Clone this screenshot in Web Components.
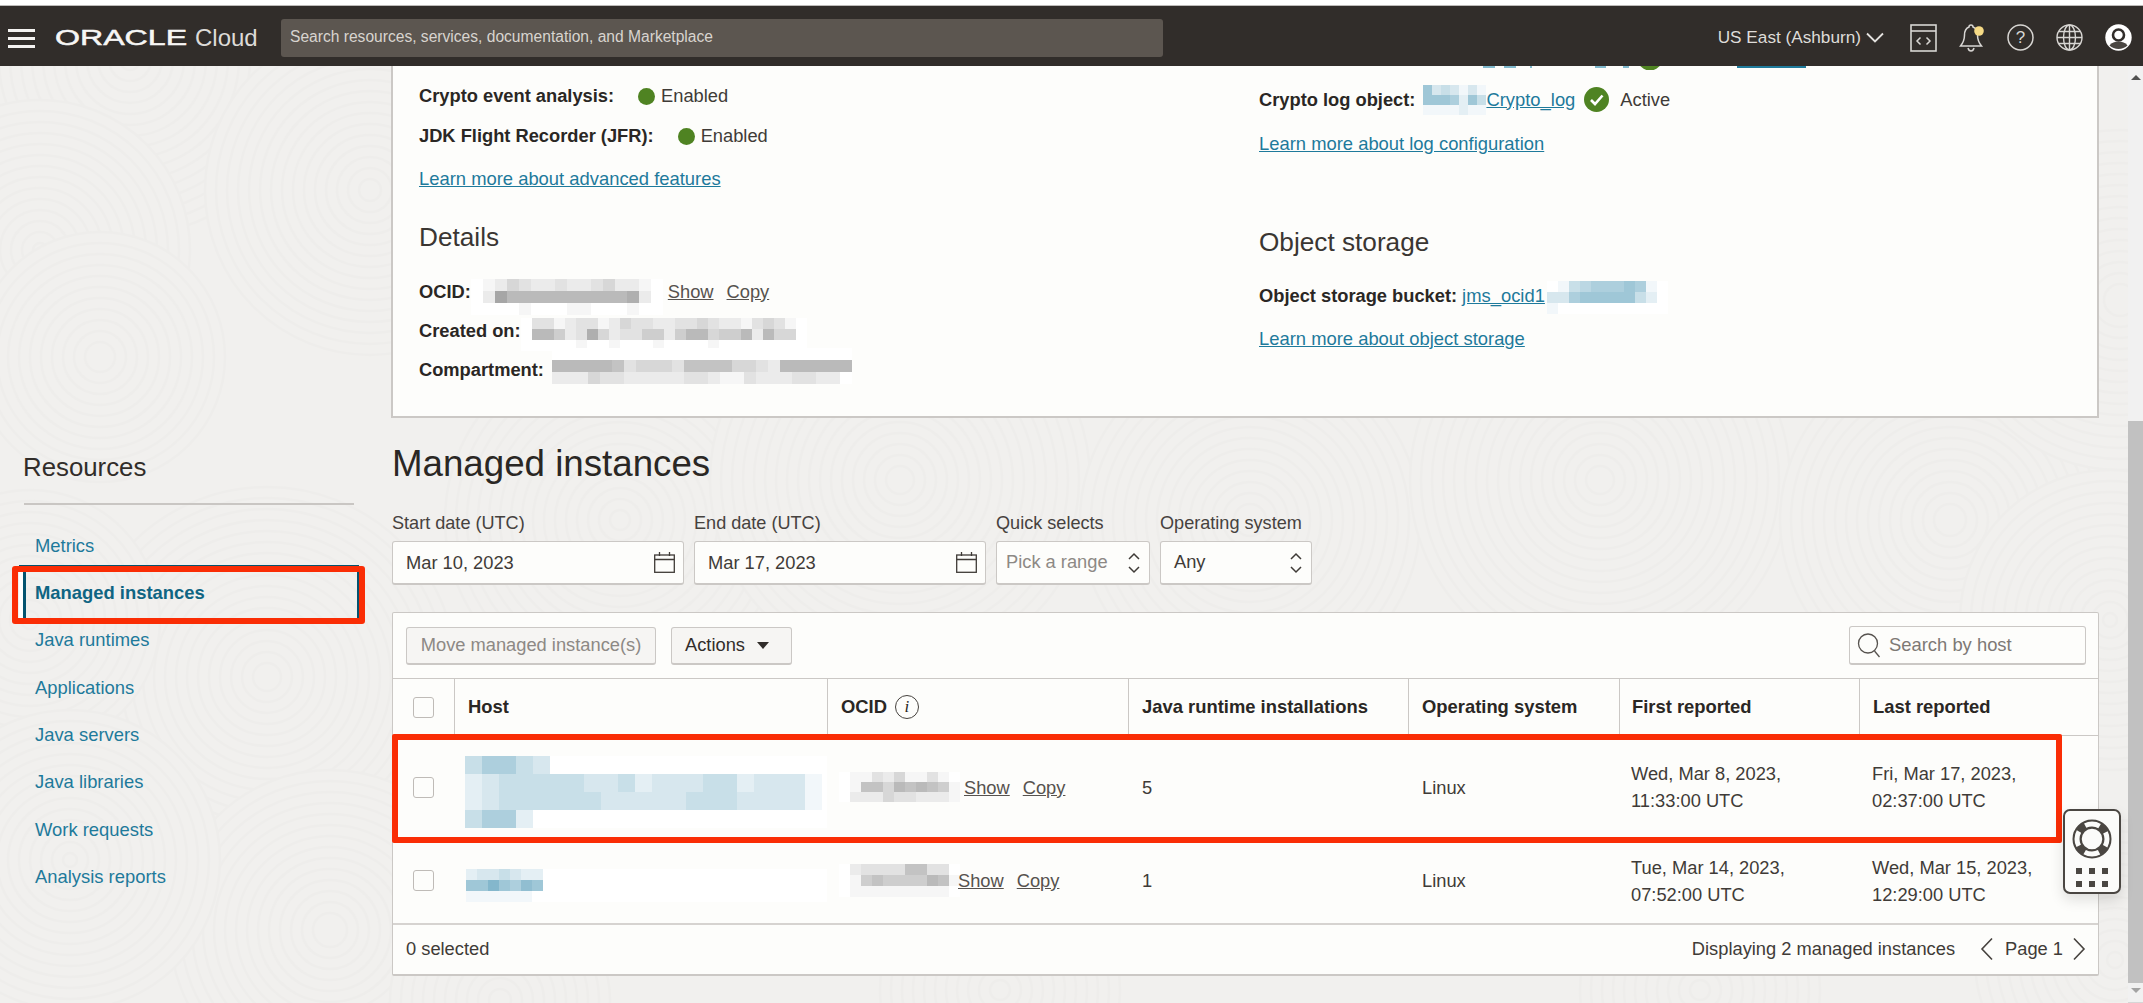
<!DOCTYPE html>
<html lang="en">
<head>
<meta charset="utf-8">
<title>Managed instances</title>
<style>
    html, body { margin: 0; height: 100%; overflow: hidden; }
    body { font: 18.3px/1.3 "Liberation Sans", Arial, sans-serif; color: #312d2a; background: #f1f0ee; }
</style>
</head>
<body>
<oci-page>
    <oci-header slot="header"></oci-header>

    <res-nav slot="nav" title="Resources">
        <nav-link>Metrics</nav-link>
        <nav-link active>Managed instances</nav-link>
        <nav-link>Java runtimes</nav-link>
        <nav-link>Applications</nav-link>
        <nav-link>Java servers</nav-link>
        <nav-link>Java libraries</nav-link>
        <nav-link>Work requests</nav-link>
        <nav-link>Analysis reports</nav-link>
    </res-nav>

    <fleet-summary slot="main">
        <div slot="left">
            <kv-row label="Crypto event analysis:" gap="25" style="margin-bottom:1px"><status-dot></status-dot><span>Enabled</span></kv-row>
            <kv-row label="JDK Flight Recorder (JFR):" gap="25"><status-dot></status-dot><span>Enabled</span></kv-row>
            <ext-link class="learn" style="margin-top:5px">Learn more about advanced features</ext-link>
            <sec-title style="margin-top:19px">Details</sec-title>
            <kv-row label="OCID:" style="margin-top:15px">
                <x-redact tone="gray" cw="12" ch="12" style="margin-top:10px" rows="0124322322342210|0297777777777820|0000100011000100"></x-redact>
                <copy-links style="margin-left:5px"></copy-links>
            </kv-row>
            <kv-row label="Created on:">
                <x-redact tone="gray" cw="11" ch="11" style="margin-top:8px" rows="03312331243322334322134310|07752384233552577455727440|00000100100010000100000000"></x-redact>
            </kv-row>
            <kv-row label="Compartment:">
                <x-redact tone="gray" cw="12" ch="12" style="margin:0 0 8px 8px" rows="0000000000000000000000000|7777763444366664432777777|2224332222233211322233220"></x-redact>
            </kv-row>
        </div>
        <div slot="right">
            <clipped-row></clipped-row>
            <kv-row label="Crypto log object:" label-gap="8" style="margin-top:10px">
                <x-redact tone="blue" cw="9" ch="10" rows="7343131|7776274|1111211"></x-redact>
                <ext-link>Crypto_log</ext-link>
                <status-check style="margin-left:9px"></status-check>
                <span style="margin-left:11px">Active</span>
            </kv-row>
            <ext-link class="learn" style="margin-top:6px">Learn more about log configuration</ext-link>
            <sec-title style="margin-top:59px">Object storage</sec-title>
            <kv-row label="Object storage bucket:" label-gap="5" style="margin-top:14px">
                <ext-link>jms_ocid1</ext-link>
                <x-redact tone="blue" cw="11" ch="11" style="margin:3px 0 0 2px" rows="01456667610|33677777420|10000000000"></x-redact>
            </kv-row>
            <ext-link class="learn" style="margin-top:5px">Learn more about object storage</ext-link>
        </div>
    </fleet-summary>

    <page-title slot="main">Managed instances</page-title>

    <filter-bar slot="main">
        <date-field label="Start date (UTC)" value="Mar 10, 2023"></date-field>
        <date-field label="End date (UTC)" value="Mar 17, 2023"></date-field>
        <select-field label="Quick selects" value="Pick a range" width="154" placeholder></select-field>
        <select-field label="Operating system" value="Any" width="152"></select-field>
    </filter-bar>

    <inst-table slot="main">
        <inst-row count="5" os="Linux" flagged style="height:107px">
            <x-redact slot="host" tone="blue" cw="17" ch="18" style="margin-top:10px;margin-left:-3px" rows="466430000000000000000|234444433423334423331|234444443333344433331|466200000000000000000"></x-redact>
            <span slot="ocid" class="pair" style="display:flex;align-items:center;margin-left:-2px">
                <x-redact tone="gray" cw="11" ch="10" style="margin-right:4px" rows="01132411310|01664767651|02224332221"></x-redact>
                <copy-links></copy-links>
            </span>
            <span slot="first">Wed, Mar 8, 2023,<br>11:33:00 UTC</span>
            <span slot="last">Fri, Mar 17, 2023,<br>02:37:00 UTC</span>
        </inst-row>
        <inst-row count="1" os="Linux" style="height:80px">
            <x-redact slot="host" tone="blue" cw="11" ch="11" style="margin-top:10px;margin-left:-2px" rows="2334322|7797687|1111110"></x-redact>
            <span slot="ocid" class="pair" style="display:flex;align-items:center;margin-left:-2px">
                <x-redact tone="gray" cw="11" ch="11" style="margin-right:-2px" rows="02333366330|01565555761|01111111110"></x-redact>
                <copy-links></copy-links>
            </span>
            <span slot="first">Tue, Mar 14, 2023,<br>07:52:00 UTC</span>
            <span slot="last">Wed, Mar 15, 2023,<br>12:29:00 UTC</span>
        </inst-row>
    </inst-table>

    <help-tab slot="over"></help-tab>
</oci-page>

<script>
class OciPage extends HTMLElement {
    constructor() {
        super();
        this.attachShadow({ mode: 'open' });
        this.shadowRoot.innerHTML = `
            <style>
                :host {
                    display: grid;
                    grid-template-columns: 392px 1707px 1fr;
                    grid-template-rows: 66px 1fr;
                    height: 1003px;
                    position: relative;
                    overflow: hidden;
                }
                .header { grid-column: 1 / -1; position: relative; z-index: 2; }
                .nav, .main { position: relative; z-index: 1; min-width: 0; }
                .edge {
                    position: relative;
                    z-index: 1;
                    display: flex;
                    justify-content: flex-end;
                }
                swirl-bg { position: absolute; inset: 0; }
            </style>
            <swirl-bg></swirl-bg>
            <div class="header"><slot name="header"></slot></div>
            <div class="nav"><slot name="nav"></slot></div>
            <div class="main"><slot name="main"></slot></div>
            <div class="edge"><page-scrollbar></page-scrollbar></div>
            <slot name="over"></slot>
        `;
    }
}

// the faint fingerprint texture behind the page, overlapping groups of rings
class SwirlBg extends HTMLElement {
    constructor() {
        super();
        this.attachShadow({ mode: 'open' });
        const spots = [];
        const fixed = [[130, 60, 175], [370, 190, 165], [600, 90, 160], [40, 250, 150], [267, 677, 190], [100, 357, 125],
            [30, 620, 130], [330, 930, 160], [70, 860, 150], [620, 520, 175], [900, 480, 190], [1250, 520, 170],
            [1600, 480, 190], [1950, 520, 170], [2120, 300, 170], [2110, 620, 150], [2115, 960, 140], [1700, 990, 120], [1000, 990, 120], [500, 1000, 110]];
        fixed.forEach(([x, y, r]) => {
            let rings = `<circle cx="${x}" cy="${y}" r="${r}" fill="#f1f0ee"/>`;
            for (let i = r; i > 6; i -= 11) {
                rings += `<circle cx="${x}" cy="${y}" r="${i}" fill="none" stroke="#eeedeb" stroke-width="2.5"/>`;
            }
            spots.push(rings);
        });
        this.shadowRoot.innerHTML = `
            <style>
                :host { display: block; }
                svg { display: block; width: 100%; height: 100%; }
            </style>
            <svg viewBox="0 0 2143 1003" preserveAspectRatio="none" aria-hidden="true">${spots.join('')}</svg>
        `;
    }
}

class OciHeader extends HTMLElement {
    constructor() {
        super();
        this.attachShadow({ mode: 'open' });
        this.shadowRoot.innerHTML = `
            <style>
                :host {
                    display: flex;
                    align-items: center;
                    box-sizing: border-box;
                    height: 66px;
                    padding: 4px 11px 0 8px;
                    background: #312d2a;
                    border-top: 5px solid #fff;
                    box-shadow: inset 0 1px 0 #bdbbb9;
                    color: #e4e2df;
                }
                .burger { width: 27px; display: flex; flex-direction: column; gap: 5px; margin-top: 1px; }
                .burger i { display: block; height: 3px; background: #f4f3f1; }
                .logo {
                    width: 131px;
                    margin-left: 20px;
                    font-size: 22px;
                    line-height: 1;
                    color: #f7f6f5;
                    -webkit-text-stroke: 0.5px #f7f6f5;
                    white-space: nowrap;
                }
                .logo span { display: inline-block; transform: scaleX(1.46); transform-origin: left center; }
                .cloud { margin-left: 9px; width: 86px; font-size: 24px; color: #dddbd8; line-height: 1; }
                .search {
                    box-sizing: border-box;
                    width: 882px;
                    height: 38px;
                    background: #5c5650;
                    border-radius: 3px;
                    padding: 0 9px;
                    display: flex;
                    align-items: center;
                    font-size: 15.6px;
                    color: #d8d4cf;
                }
                .region { margin-left: auto; font-size: 17.2px; color: #dedcd9; white-space: nowrap; }
                .chev { margin-left: 5px; }
                .tools { display: flex; align-items: center; margin-left: 26px; }
                .tools svg { display: block; }
                .tools .gap { margin-left: 22px; }
            </style>
            <div class="burger"><i></i><i></i><i></i></div>
            <div class="logo"><span>ORACLE</span></div>
            <div class="cloud">Cloud</div>
            <div class="search">Search resources, services, documentation, and Marketplace</div>
            <div class="region">US East (Ashburn)</div>
            <svg class="chev" width="18" height="11" viewBox="0 0 18 11"><path d="M1 1.5 9 9.5 17 1.5" fill="none" stroke="#e4e2df" stroke-width="1.8"/></svg>
            <div class="tools">
                <svg width="27" height="28" viewBox="0 0 27 28" fill="none" stroke="#d8d6d3" stroke-width="1.6">
                    <rect x="1" y="1" width="25" height="26"/><path d="M1 7h25"/><path d="M10.5 13.5 7 17l3.5 3.5M16.5 13.5 20 17l-3.5 3.5" stroke-width="1.5"/>
                </svg>
                <svg class="gap" width="28" height="30" viewBox="0 0 28 30" fill="none" stroke="#d8d6d3" stroke-width="1.5">
                    <path d="M12 2c-1.200 0-2 .8-2 2-3.500 1.500-4.500 4.500-4.500 8 0 5-1.500 8-4 11h21c-2.500-3-4-6-4-11 0-3.500-1-6.500-4.500-8 0-1.200-1.200-2-2-2z"/>
                    <path d="M9 25c.5 2 1.700 3 3 3s2.500-1 3-3"/>
                    <circle cx="20" cy="8" r="4.800" fill="#f6da85" stroke="none"/>
                </svg>
                <svg class="gap" style="margin-left:20px" width="27" height="27" viewBox="0 0 27 27">
                    <circle cx="13.500" cy="13.500" r="12.500" fill="none" stroke="#d8d6d3" stroke-width="1.5"/>
                    <text x="13.500" y="19" text-anchor="middle" font-family="Liberation Sans" font-size="17" fill="#d8d6d3">?</text>
                </svg>
                <svg class="gap" width="27" height="27" viewBox="0 0 27 27" fill="none" stroke="#d8d6d3" stroke-width="1.4">
                    <circle cx="13.500" cy="13.500" r="12.500"/><ellipse cx="13.500" cy="13.500" rx="6" ry="12.500"/>
                    <path d="M13.500 1v25M1 13.500h25M3 7.500h21M3 19.500h21"/>
                </svg>
                <svg class="gap" width="27" height="27" viewBox="0 0 27 27">
                    <circle cx="13.500" cy="13.500" r="13.200" fill="#fff"/>
                    <circle cx="13.500" cy="11" r="5.500" fill="#fff" stroke="#312d2a" stroke-width="2.600"/>
                    <path d="M4.500 21.500c2-3 5.500-4 9-4s7 1 9 4c-2.400 2.300-5.500 3.500-9 3.500s-6.600-1.200-9-3.500z" fill="#4a4642"/>
                </svg>
            </div>
        `;
    }
}

class ResNav extends HTMLElement {
    constructor() {
        super();
        this.attachShadow({ mode: 'open' });
        this.shadowRoot.innerHTML = `
            <style>
                :host { display: block; padding: 381px 38px 0 24px; }
                h2 {
                    margin: 0 0 0 -1px;
                    height: 40px;
                    line-height: 40px;
                    font-size: 25.8px;
                    font-weight: 400;
                    color: #312d2a;
                }
                .rule { height: 2px; margin: 16px 0 17px; background: #c9c6c3; }
                ul { display: flex; flex-direction: column; margin: 0 -5px; padding: 0; }
            </style>
            <h2></h2>
            <div class="rule"></div>
            <ul><slot></slot></ul>
        `;
        this.shadowRoot.querySelector('h2').textContent = this.getAttribute('title');
        this.removeAttribute('title');
    }
}

class NavLink extends HTMLElement {
    constructor() {
        super();
        this.attachShadow({ mode: 'open' });
        this.shadowRoot.innerHTML = `
            <style>
                :host {
                    display: flex;
                    align-items: center;
                    position: relative;
                    height: 47.330px;
                    padding-left: 16px;
                    font-size: 18.4px;
                    color: #1e7a9b;
                    white-space: nowrap;
                }
                :host([active]) { color: #0f6583; font-weight: 700; }
                :host([active])::before {
                    content: "";
                    position: absolute;
                    top: -4px;
                    bottom: -3px;
                    left: 0;
                    right: 0;
                    border: solid #04536f;
                    border-width: 2px 2px 0 0;
                    box-shadow: inset 4px 0 0 #fff, inset 7px 0 0 #04536f;
                }
                :host([active])::after {
                    content: "";
                    position: absolute;
                    top: -3px;
                    bottom: -7px;
                    left: -7px;
                    right: -6px;
                    border: 6px solid #fa2d05;
                    border-radius: 3px;
                }
            </style>
            <slot></slot>
        `;
    }
}

class FleetSummary extends HTMLElement {
    constructor() {
        super();
        this.attachShadow({ mode: 'open' });
        this.shadowRoot.innerHTML = `
            <style>
                :host {
                    display: grid;
                    grid-template-columns: 840px 1fr;
                    box-sizing: border-box;
                    height: 352px;
                    margin-left: -1px;
                    padding: 0 26px 0 26px;
                    background: #fdfdfb;
                    border: 2px solid #cbc8c5;
                    border-top: 0;
                }
                ::slotted([slot="left"]) { padding-top: 10px; }
            </style>
            <slot name="left"></slot>
            <slot name="right"></slot>
        `;
    }
}

class KvRow extends HTMLElement {
    constructor() {
        super();
        this.attachShadow({ mode: 'open' });
        const gap = this.getAttribute('gap') || 0;
        const labelGap = this.getAttribute('label-gap') || 0;
        this.shadowRoot.innerHTML = `
            <style>
                :host { display: flex; align-items: center; height: 39px; white-space: nowrap; color: #3f3b37; }
                b { color: #2a2724; margin-right: ${labelGap}px; }
                .value { display: flex; align-items: center; margin-left: ${gap}px; }
            </style>
            <b></b>
            <div class="value"><slot></slot></div>
        `;
        this.shadowRoot.querySelector('b').textContent = this.getAttribute('label');
    }
}

class StatusDot extends HTMLElement {
    constructor() {
        super();
        this.attachShadow({ mode: 'open' });
        this.shadowRoot.innerHTML = `
            <style>
                :host { display: block; width: 17px; height: 17px; margin: 2px 6px 0 -1px; border-radius: 50%; background: #4f8322; }
            </style>
        `;
    }
}

class StatusCheck extends HTMLElement {
    constructor() {
        super();
        this.attachShadow({ mode: 'open' });
        this.shadowRoot.innerHTML = `
            <style>
                :host { display: block; width: 25px; height: 25px; }
                svg { display: block; }
            </style>
            <svg width="25" height="25" viewBox="0 0 25 25">
                <circle cx="12.500" cy="12.500" r="12.500" fill="#4f8322"/>
                <path d="M7 13l4 4 7.500-8.500" fill="none" stroke="#fff" stroke-width="2.600"/>
            </svg>
        `;
    }
}

class ExtLink extends HTMLElement {
    constructor() {
        super();
        this.attachShadow({ mode: 'open' });
        this.shadowRoot.innerHTML = `
            <style>
                :host { display: inline-block; font-size: 18.4px; color: #1e7a9b; white-space: nowrap; }
                :host(.learn) { display: flex; align-items: center; height: 38px; }
                span { text-decoration: underline; }
            </style>
            <span><slot></slot></span>
        `;
    }
}

class CopyLinks extends HTMLElement {
    constructor() {
        super();
        this.attachShadow({ mode: 'open' });
        this.shadowRoot.innerHTML = `
            <style>
                :host { display: inline-flex; gap: 13px; color: #56524e; white-space: nowrap; }
                span { text-decoration: underline; }
            </style>
            <span>Show</span><span>Copy</span>
        `;
    }
}

class SecTitle extends HTMLElement {
    constructor() {
        super();
        this.attachShadow({ mode: 'open' });
        this.shadowRoot.innerHTML = `
            <style>
                :host { display: block; height: 40px; line-height: 40px; font-size: 26.2px; color: #3a3632; }
            </style>
            <slot></slot>
        `;
    }
}

// the bottom edge of a row that the fixed header hides
class ClippedRow extends HTMLElement {
    constructor() {
        super();
        this.attachShadow({ mode: 'open' });
        this.shadowRoot.innerHTML = `
            <style>
                :host { display: block; height: 4px; margin-left: 141px; overflow: hidden; }
                svg { display: block; }
            </style>
            <svg width="420" height="4" viewBox="0 0 420 4">
                <rect x="83" width="12" height="2" fill="#7fb8cc"/>
                <rect x="104" width="12" height="2" fill="#7fb8cc"/>
                <rect x="130" width="2" height="2" fill="#7fb8cc"/>
                <rect x="195" width="11" height="2" fill="#7fb8cc"/>
                <rect x="223" width="6" height="2" fill="#7fb8cc"/>
                <circle cx="250" cy="-8" r="12.500" fill="#4f8322"/>
                <rect x="337" width="69" height="2" fill="#1e7a9b"/>
            </svg>
        `;
    }
}

// pixelated block that stands in for a hidden value, one digit per cell
class XRedact extends HTMLElement {
    constructor() {
        super();
        this.attachShadow({ mode: 'open' });
        const cw = +this.getAttribute('cw');
        const ch = +this.getAttribute('ch');
        const rgb = this.getAttribute('tone') === 'blue' ? '110,170,195' : '150,150,150';
        const rows = this.getAttribute('rows').split('|').map(row => {
            const cells = [...row].map(c => `<i style="background:rgba(${rgb},${(c / 9 * 0.85).toFixed(2)})"></i>`).join('');
            return `<div>${cells}</div>`;
        }).join('');
        this.shadowRoot.innerHTML = `
            <style>
                :host { display: block; flex: none; background: #fff; }
                div { display: flex; height: ${ch}px; }
                i { display: block; width: ${cw}px; height: ${ch}px; }
            </style>
            ${rows}
        `;
    }
}

class PageTitle extends HTMLElement {
    constructor() {
        super();
        this.attachShadow({ mode: 'open' });
        this.shadowRoot.innerHTML = `
            <style>
                :host { display: block; height: 50px; line-height: 50px; margin-top: 21px; font-size: 36.7px; color: #2a2724; }
            </style>
            <slot></slot>
        `;
    }
}

class FilterBar extends HTMLElement {
    constructor() {
        super();
        this.attachShadow({ mode: 'open' });
        this.shadowRoot.innerHTML = `
            <style>
                :host { display: flex; gap: 10px; margin-top: 22px; }
            </style>
            <slot></slot>
        `;
    }
}

const fieldStyles = `
    :host { display: flex; flex-direction: column; gap: 6px; }
    label { height: 24px; line-height: 24px; font-size: 18.1px; color: #46423e; white-space: nowrap; }
    .box {
        display: flex;
        align-items: center;
        justify-content: space-between;
        box-sizing: border-box;
        height: 44px;
        background: #fdfdfb;
        border: 1px solid #cbc8c5;
        border-bottom-width: 2px;
        border-radius: 3px;
        color: #3f3b37;
        white-space: nowrap;
    }
    svg { display: block; flex: none; }
`;

class DateField extends HTMLElement {
    constructor() {
        super();
        this.attachShadow({ mode: 'open' });
        this.shadowRoot.innerHTML = `
            <style>
                ${fieldStyles}
                .box { width: 292px; padding: 0 8px 0 13px; }
            </style>
            <label></label>
            <div class="box">
                <span class="val"></span>
                <svg width="21" height="21" viewBox="0 0 21 21" fill="none" stroke="#3f3b37" stroke-width="1.3">
                    <rect x="0.700" y="3" width="19.600" height="17.300"/><path d="M.7 7.500h19.600M5.500 0v4M15.500 0v4"/>
                </svg>
            </div>
        `;
        this.shadowRoot.querySelector('label').textContent = this.getAttribute('label');
        this.shadowRoot.querySelector('.val').textContent = this.getAttribute('value');
    }
}

class SelectField extends HTMLElement {
    constructor() {
        super();
        this.attachShadow({ mode: 'open' });
        const dim = this.hasAttribute('placeholder');
        this.shadowRoot.innerHTML = `
            <style>
                ${fieldStyles}
                .box { width: ${this.getAttribute('width')}px; padding: 0 8px 0 ${dim ? 9 : 13}px; color: ${dim ? '#8d8985' : '#3f3b37'}; }
                .val { margin-top: -2px; }
            </style>
            <label></label>
            <div class="box">
                <span class="val"></span>
                <svg width="14" height="22" viewBox="0 0 14 22" fill="none" stroke="#3f3b37" stroke-width="1.500">
                    <path d="M2 7l5-5 5 5M2 15l5 5 5-5"/>
                </svg>
            </div>
        `;
        this.shadowRoot.querySelector('label').textContent = this.getAttribute('label');
        this.shadowRoot.querySelector('.val').textContent = this.getAttribute('value');
    }
}

const instCols = '61px 373px 301px 280px 211px 240px 1fr';

class InstTable extends HTMLElement {
    constructor() {
        super();
        this.attachShadow({ mode: 'open' });
        this.shadowRoot.innerHTML = `
            <style>
                :host {
                    display: block;
                    box-sizing: border-box;
                    height: 364px;
                    margin-top: 27px;
                    background: #fdfdfb;
                    border: 1px solid #cbc8c5;
                    border-bottom-width: 2px;
                    border-radius: 2px;
                }
                .toolbar {
                    display: flex;
                    align-items: center;
                    box-sizing: border-box;
                    height: 65px;
                    padding: 0 12px 0 13px;
                }
                button {
                    box-sizing: border-box;
                    height: 38px;
                    padding: 0;
                    font: inherit;
                    font-size: 18.3px;
                    background: #f6f5f3;
                    border: 1px solid #cbc8c5;
                    border-bottom-width: 2px;
                    border-radius: 3px;
                    color: #312d2a;
                }
                .move { width: 250px; color: #8d8985; }
                .actions { width: 121px; margin-left: 15px; padding-left: 13px; text-align: left; white-space: nowrap; }
                .actions i {
                    display: inline-block;
                    margin-left: 12px;
                    border: solid transparent;
                    border-width: 7px 6.500px 0;
                    border-top-color: #312d2a;
                    vertical-align: 2px;
                }
                .search {
                    display: flex;
                    align-items: center;
                    gap: 8px;
                    box-sizing: border-box;
                    width: 237px;
                    height: 39px;
                    margin-left: auto;
                    padding-left: 7px;
                    background: #fdfdfb;
                    border: 1px solid #cbc8c5;
                    border-bottom-width: 2px;
                    border-radius: 3px;
                    font-size: 18.4px;
                    color: #7d7975;
                }
                .head {
                    display: grid;
                    grid-template-columns: ${instCols};
                    height: 57px;
                    border-top: 1px solid #cbc8c5;
                    box-sizing: border-box;
                    font-size: 18.4px;
                    font-weight: 700;
                    color: #2a2724;
                }
                .head > div {
                    display: flex;
                    align-items: center;
                    padding-left: 13px;
                    border-left: 1px solid #cbc8c5;
                    white-space: nowrap;
                }
                .head > .pick { border-left: 0; padding-left: 20px; }
                .head > .tight { padding-left: 12px; }
                .info {
                    display: inline-flex;
                    align-items: center;
                    justify-content: center;
                    box-sizing: border-box;
                    width: 24px;
                    height: 24px;
                    margin-left: 8px;
                    border: 1.500px solid #46423e;
                    border-radius: 50%;
                    font: italic 400 17px "Liberation Serif", serif;
                }
                .rows { display: block; border-top: 1px solid #cbc8c5; }
                .foot {
                    display: flex;
                    align-items: center;
                    box-sizing: border-box;
                    height: 53px;
                    padding: 0 12px 3px 13px;
                    border-top: 2px solid #d6d3d0;
                    color: #3f3b37;
                }
                .pager { display: flex; align-items: center; margin-left: auto; white-space: nowrap; }
                .pager svg { display: block; }
                box-check { flex: none; }
            </style>
            <div class="toolbar">
                <button class="move">Move managed instance(s)</button>
                <button class="actions">Actions<i></i></button>
                <div class="search">
                    <svg width="24" height="25" viewBox="0 0 24 25" fill="none" stroke="#56524e" stroke-width="1.300">
                        <circle cx="11" cy="10.500" r="9.500"/><path d="M17.500 18l5 6"/>
                    </svg>
                    <span>Search by host</span>
                </div>
            </div>
            <div class="head">
                <div class="pick"><box-check></box-check></div>
                <div>Host</div>
                <div>OCID<span class="info">i</span></div>
                <div>Java runtime installations</div>
                <div>Operating system</div>
                <div class="tight">First reported</div>
                <div>Last reported</div>
            </div>
            <div class="rows"><slot></slot></div>
            <div class="foot">
                <span>0 selected</span>
                <div class="pager">
                    <span>Displaying 2 managed instances</span>
                    <svg style="margin-left:25px" width="14" height="24" viewBox="0 0 14 24"><path d="M12 1.500 2 12l10 10.500" fill="none" stroke="#46423e" stroke-width="1.600"/></svg>
                    <span style="margin-left:11px">Page 1</span>
                    <svg style="margin-left:9px" width="14" height="24" viewBox="0 0 14 24"><path d="M2 1.500 12 12 2 22.500" fill="none" stroke="#46423e" stroke-width="1.600"/></svg>
                </div>
            </div>
        `;
    }
}

class BoxCheck extends HTMLElement {
    constructor() {
        super();
        this.attachShadow({ mode: 'open' });
        this.shadowRoot.innerHTML = `
            <style>
                :host {
                    display: block;
                    box-sizing: border-box;
                    width: 21px;
                    height: 21px;
                    background: #fdfdfb;
                    border: 1.500px solid #bfbbb7;
                    border-radius: 3px;
                }
            </style>
        `;
    }
}

class InstRow extends HTMLElement {
    constructor() {
        super();
        this.attachShadow({ mode: 'open' });
        this.shadowRoot.innerHTML = `
            <style>
                :host {
                    display: grid;
                    grid-template-columns: ${instCols};
                    align-items: center;
                    position: relative;
                    box-sizing: border-box;
                    padding-bottom: 5px;
                    color: #3f3b37;
                    white-space: nowrap;
                    line-height: 27px;
                }
                :host([flagged])::after {
                    content: "";
                    position: absolute;
                    top: -2px;
                    bottom: 0;
                    left: -1px;
                    right: 36px;
                    border: 6px solid #fa2d05;
                    border-radius: 2px;
                }
                .pick { padding-left: 20px; }
                .cell { padding-left: 14px; }
                .first { padding-left: 12px; }
                .last { padding-left: 13px; }
            </style>
            <div class="pick"><box-check></box-check></div>
            <div class="cell"><slot name="host"></slot></div>
            <div class="cell"><slot name="ocid"></slot></div>
            <div class="cell count"></div>
            <div class="cell os"></div>
            <div class="first"><slot name="first"></slot></div>
            <div class="last"><slot name="last"></slot></div>
        `;
        this.shadowRoot.querySelector('.count').textContent = this.getAttribute('count');
        this.shadowRoot.querySelector('.os').textContent = this.getAttribute('os');
    }
}

class HelpTab extends HTMLElement {
    constructor() {
        super();
        this.attachShadow({ mode: 'open' });
        this.shadowRoot.innerHTML = `
            <style>
                :host {
                    position: absolute;
                    left: 2063px;
                    top: 809px;
                    z-index: 3;
                    box-sizing: border-box;
                    width: 58px;
                    height: 85px;
                    display: flex;
                    flex-direction: column;
                    align-items: center;
                    padding-top: 8px;
                    background: #fbfbfa;
                    border: 2px solid #4a4642;
                    border-radius: 7px;
                    box-shadow: 0 6px 14px rgba(0, 0, 0, 0.12);
                }
                .dots { display: grid; grid-template-columns: repeat(3, 6px); gap: 7px 7px; margin-top: 9px; }
                .dots i { display: block; height: 6px; background: #4a4642; }
                svg { display: block; }
            </style>
            <svg width="40" height="40" viewBox="0 0 40 40">
                <circle cx="20" cy="20" r="15" fill="none" stroke="#4a4642" stroke-width="9"/>
                <circle cx="20" cy="20" r="15" fill="none" stroke="#fbfbfa" stroke-width="5" stroke-dasharray="15 8.560" stroke-dashoffset="7.500"/>
                <circle cx="20" cy="20" r="11" fill="#fbfbfa"/>
                <circle cx="20" cy="20" r="11" fill="none" stroke="#4a4642" stroke-width="1.500"/>
            </svg>
            <div class="dots"><i></i><i></i><i></i><i></i><i></i><i></i></div>
        `;
    }
}

class PageScrollbar extends HTMLElement {
    constructor() {
        super();
        this.attachShadow({ mode: 'open' });
        this.shadowRoot.innerHTML = `
            <style>
                :host {
                    display: flex;
                    flex-direction: column;
                    align-items: center;
                    box-sizing: border-box;
                    width: 15px;
                    height: 937px;
                    padding-top: 9px;
                    background: #f1f1f1;
                    border-bottom: 1px solid #d6d6d6;
                }
                .up, .down { width: 0; border: solid transparent; border-width: 0 5px 5px; border-bottom-color: #505050; }
                .down { border-width: 5px 5px 0; border-top-color: #a3a3a3; border-bottom-color: transparent; margin-top: 5px; }
                .thumb { width: 15px; height: 562px; margin-top: 341px; background: #c1c1c1; }
            </style>
            <div class="up"></div>
            <div class="thumb"></div>
            <div class="down"></div>
        `;
    }
}

customElements.define('oci-page', OciPage);
customElements.define('swirl-bg', SwirlBg);
customElements.define('oci-header', OciHeader);
customElements.define('res-nav', ResNav);
customElements.define('nav-link', NavLink);
customElements.define('fleet-summary', FleetSummary);
customElements.define('kv-row', KvRow);
customElements.define('status-dot', StatusDot);
customElements.define('status-check', StatusCheck);
customElements.define('ext-link', ExtLink);
customElements.define('copy-links', CopyLinks);
customElements.define('sec-title', SecTitle);
customElements.define('clipped-row', ClippedRow);
customElements.define('x-redact', XRedact);
customElements.define('page-title', PageTitle);
customElements.define('filter-bar', FilterBar);
customElements.define('date-field', DateField);
customElements.define('select-field', SelectField);
customElements.define('inst-table', InstTable);
customElements.define('box-check', BoxCheck);
customElements.define('inst-row', InstRow);
customElements.define('help-tab', HelpTab);
customElements.define('page-scrollbar', PageScrollbar);
</script>
</body>
</html>
